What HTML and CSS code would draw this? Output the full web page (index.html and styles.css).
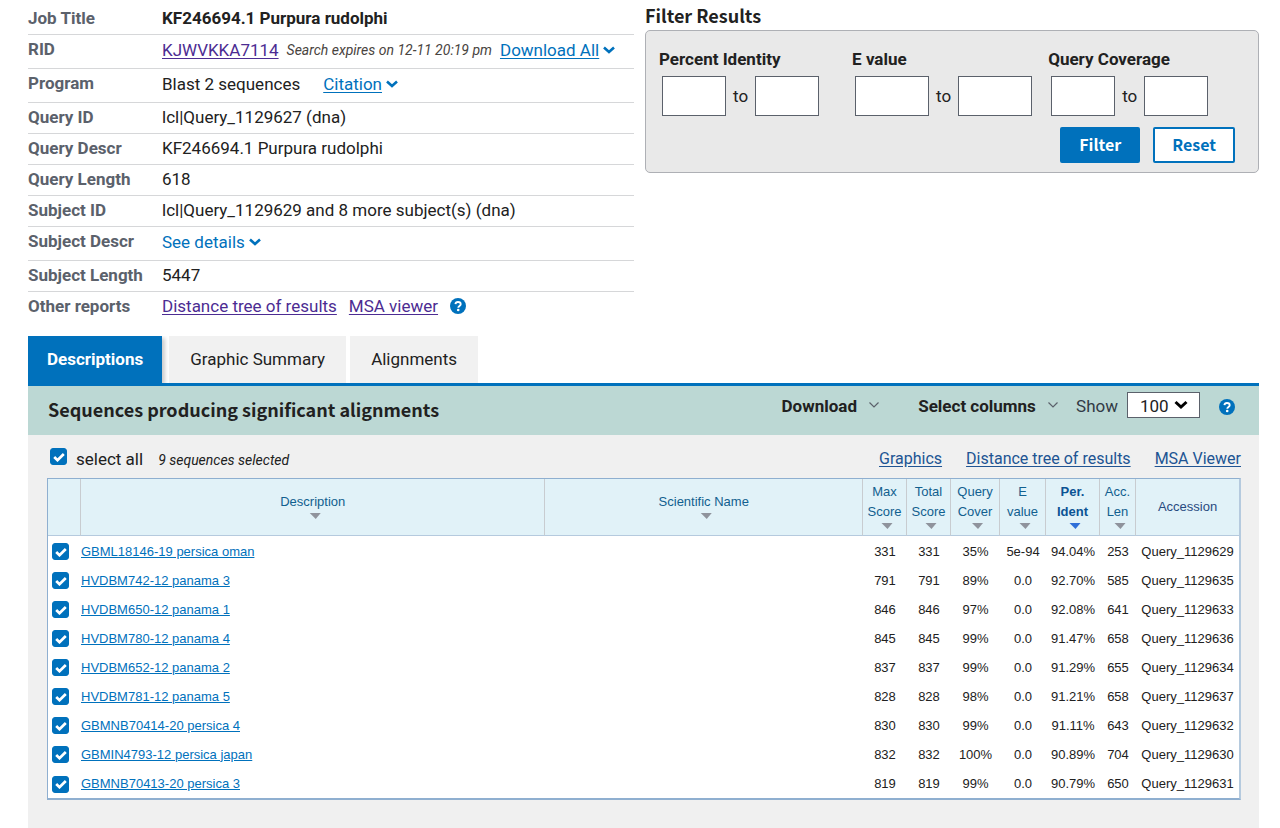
FILE: index.html
```html
<!DOCTYPE html>
<html lang="en">
<head>
    <meta charset="UTF-8">
    <meta name="viewport" content="width=device-width, initial-scale=1.0">
    <title>NCBI Blast: KF246694.1 Purpura rudolphi</title>
    <link rel="stylesheet" href="styles.css">
</head>
<body>
    <svg class="sprite" aria-hidden="true">
        <symbol id="chevron" viewBox="0 0 12 8"><path d="M1 1.500 6 6l5-4.500" fill="none" stroke="currentColor" stroke-width="2.600"/></symbol>
        <symbol id="chevron-thin" viewBox="0 0 10 8"><path d="M.5 1.500 5 6l4.500-4.500" fill="none" stroke="currentColor" stroke-width="1.200"/></symbol>
        <symbol id="help" viewBox="0 0 16 16">
            <circle cx="8" cy="8" r="8" fill="#0071bc"/>
            <path d="M5.400 6.200C5.600 4.600 6.700 4 8 4c1.500 0 2.700.8 2.700 2.200 0 1.800-2.400 1.800-2.400 3.500" fill="none" stroke="#fff" stroke-width="1.900"/>
            <circle cx="8.200" cy="12" r="1.300" fill="#fff"/>
        </symbol>
    </svg>

    <div class="top">
        <dl class="info">
            <div class="row"><dt>Job Title</dt><dd><strong>KF246694.1 Purpura rudolphi</strong></dd></div>
            <div class="row tall">
                <dt>RID</dt>
                <dd class="rid">
                    <a href="#" class="visited">KJWVKKA7114</a>
                    <em class="expires">Search expires on 12-11 20:19 pm</em>
                    <span><a href="#">Download All</a> <svg class="chev"><use href="#chevron"/></svg></span>
                </dd>
            </div>
            <div class="row tall">
                <dt>Program</dt>
                <dd class="program">
                    <span>Blast 2 sequences</span>
                    <span><a href="#">Citation</a> <svg class="chev"><use href="#chevron"/></svg></span>
                </dd>
            </div>
            <div class="row"><dt>Query ID</dt><dd>lcl|Query_1129627 (dna)</dd></div>
            <div class="row"><dt>Query Descr</dt><dd>KF246694.1 Purpura rudolphi</dd></div>
            <div class="row"><dt>Query Length</dt><dd>618</dd></div>
            <div class="row"><dt>Subject ID</dt><dd>lcl|Query_1129629 and 8 more subject(s) (dna)</dd></div>
            <div class="row tall">
                <dt>Subject Descr</dt>
                <dd><button type="button" class="link">See details <svg class="chev"><use href="#chevron"/></svg></button></dd>
            </div>
            <div class="row"><dt>Subject Length</dt><dd>5447</dd></div>
            <div class="row">
                <dt>Other reports</dt>
                <dd class="reports">
                    <a href="#" class="visited">Distance tree of results</a>
                    <a href="#" class="visited">MSA viewer</a>
                    <button type="button" class="help" aria-label="Help"><svg><use href="#help"/></svg></button>
                </dd>
            </div>
        </dl>

        <form class="filter">
            <h2>Filter Results</h2>
            <div class="filter-box">
                <div class="fields">
                    <fieldset>
                        <legend>Percent Identity</legend>
                        <div class="range">
                            <input type="text" id="identFrom" aria-label="Percent identity from">
                            <label for="identTo">to</label>
                            <input type="text" id="identTo">
                        </div>
                    </fieldset>
                    <fieldset class="wide">
                        <legend>E value</legend>
                        <div class="range">
                            <input type="text" id="evalFrom" aria-label="E value from">
                            <label for="evalTo">to</label>
                            <input type="text" id="evalTo">
                        </div>
                    </fieldset>
                    <fieldset>
                        <legend>Query Coverage</legend>
                        <div class="range">
                            <input type="text" id="covFrom" aria-label="Query coverage from">
                            <label for="covTo">to</label>
                            <input type="text" id="covTo">
                        </div>
                    </fieldset>
                </div>
                <div class="actions">
                    <button type="button" class="btn primary">Filter</button>
                    <button type="reset" class="btn">Reset</button>
                </div>
            </div>
        </form>
    </div>

    <div class="tabs" role="tablist">
        <button type="button" role="tab" class="tab active" aria-selected="true">Descriptions</button>
        <button type="button" role="tab" class="tab">Graphic Summary</button>
        <button type="button" role="tab" class="tab">Alignments</button>
    </div>

    <div class="panel">
        <div class="panel-head">
            <h3>Sequences producing significant alignments</h3>
            <div class="controls">
                <button type="button" class="menu">Download <svg class="chev"><use href="#chevron-thin"/></svg></button>
                <button type="button" class="menu columns">Select columns <svg class="chev"><use href="#chevron-thin"/></svg></button>
                <label for="numSeq">Show</label>
                <select id="numSeq">
                    <option>10</option>
                    <option>50</option>
                    <option selected>100</option>
                    <option>250</option>
                </select>
                <button type="button" class="help" aria-label="Help"><svg><use href="#help"/></svg></button>
            </div>
        </div>

        <div class="toolbar">
            <div class="select-all">
                <input type="checkbox" id="selectAll" checked>
                <label for="selectAll">select all</label>
                <em>9 sequences selected</em>
            </div>
            <div class="links">
                <a href="#">Graphics</a>
                <a href="#">Distance tree of results</a>
                <a href="#">MSA Viewer</a>
            </div>
        </div>

        <table>
            <colgroup>
                <col class="c-check"><col class="c-desc"><col class="c-name"><col class="c-score"><col class="c-score"><col class="c-cover"><col class="c-eval"><col class="c-ident"><col class="c-len"><col class="c-acc">
            </colgroup>
            <thead>
                <tr>
                    <th></th>
                    <th>Description<i class="sort"></i></th>
                    <th>Scientific Name<i class="sort"></i></th>
                    <th>Max<br>Score<i class="sort"></i></th>
                    <th>Total<br>Score<i class="sort"></i></th>
                    <th>Query<br>Cover<i class="sort"></i></th>
                    <th>E<br>value<i class="sort"></i></th>
                    <th class="sorted">Per.<br>Ident<i class="sort"></i></th>
                    <th>Acc.<br>Len<i class="sort"></i></th>
                    <th class="acc">Accession</th>
                </tr>
            </thead>
            <tbody id="rows"></tbody>
        </table>
    </div>

    <script src="script.js"></script>
</body>
</html>
```
FILE: styles.css
```css
* {
    box-sizing: border-box;
}
body {
    margin: 0;
    padding: 4px 21px 0 28px;
    font-family: Roboto, "Liberation Sans", sans-serif;
    font-size: 17px;
    line-height: 20px;
    color: #212121;
    background: #fff;
}
.sprite {
    display: none;
}
a {
    color: #0071bc;
    text-underline-offset: 2px;
}
a.visited {
    color: #4c2c92;
}
button {
    font: inherit;
    color: inherit;
    background: none;
    border: 0;
    padding: 0;
    cursor: pointer;
}
.chev {
    width: 12px;
    height: 8px;
    margin-bottom: 2px;
}

/* job summary */
.top {
    display: grid;
    grid-template-columns: 606fr 614fr;
    gap: 11px;
    align-items: start;
}
.info {
    margin: 0;
}
.row {
    display: flex;
    height: 31px;
    padding-top: 4px;
    border-bottom: 1px solid #d6d7d9;
}
.row.tall {
    height: 34px;
}
.row:last-child {
    border-bottom: 0;
}
.info dt {
    width: 134px;
    font-weight: bold;
    color: #5b616b;
}
.info dd {
    display: flex;
    margin: 0;
    white-space: nowrap;
}
.info .chev {
    color: #0071bc;
}
.info dd.rid {
    gap: 8px;
}
.info dd.program {
    gap: 23px;
}
.info dd.reports {
    gap: 12px;
    height: 20px;
    align-items: center;
}
.tall dd {
    padding-top: 1px;
}
.tall .link {
    align-self: flex-start;
}
.expires {
    font-size: 14px;
    color: #494440;
}
.link {
    color: #0071bc;
}
.help svg {
    display: block;
    width: 16px;
    height: 16px;
}

/* filter form */
h2, h3 {
    margin: 0;
    font-family: "Noto Sans CJK JP", "Noto Sans", sans-serif;
    font-weight: bold;
    font-size: 18px;
}
h2 {
    padding-bottom: 4px;
    line-height: 22px;
}
.filter-box {
    height: 143px;
    padding: 18px 23px 0 13px;
    border: 1px solid #aeb0b5;
    border-radius: 5px;
    background: #e9e9e9;
}
.fields {
    display: flex;
    gap: 30px;
}
fieldset {
    border: 0;
    margin: 0;
    padding: 0;
    min-width: 0;
}
legend {
    padding: 0;
    font-weight: bold;
}
.range {
    display: flex;
    align-items: center;
    gap: 7px;
    padding: 7px 0 0 3px;
}
.range input {
    width: 64px;
    height: 40px;
    padding: 4px;
    font: inherit;
    border: 1px solid #5b616b;
    border-radius: 0;
    background: #fff;
}
.wide .range input {
    width: 74px;
}
.fields .wide {
    margin-right: -14px;
    margin-left: 3px;
}
.actions {
    display: flex;
    justify-content: flex-end;
    gap: 13px;
    padding-top: 11px;
}
.btn {
    height: 36px;
    padding: 0 17px 2px;
    font-family: "Noto Sans CJK JP", "Noto Sans", sans-serif;
    font-size: 16px;
    font-weight: bold;
    line-height: 20px;
    color: #0071bc;
    background: #fff;
    border: 2px solid #0071bc;
    border-radius: 2px;
}
.btn.primary {
    color: #fff;
    background: #0071bc;
}

/* tabs */
.tabs {
    display: flex;
    gap: 4px;
    margin-top: 13px;
    border-bottom: 3px solid #0071bc;
}
.tab {
    height: 47px;
    padding: 0 21px 2px;
    background: #f1f1f1;
}
.tab.active {
    padding: 0 19px 2px;
    margin-right: 3px;
    color: #fff;
    font-weight: bold;
    background: #0071bc;
    box-shadow: 3px 2px 4px #ccc;
    clip-path: inset(0 -8px 0 0);
}

/* results */
.panel {
    padding-bottom: 28px;
    background: #f0f0f0;
}
.panel-head {
    display: flex;
    justify-content: space-between;
    align-items: flex-start;
    height: 49px;
    padding: 0 24px 0 20px;
    background: #bcd8d4;
}
h3 {
    line-height: 46px;
}
.controls {
    display: flex;
    align-items: center;
    padding-top: 6px;
}
.menu,
.controls label {
    padding-top: 2px;
}
.menu {
    font-weight: bold;
    margin-right: 39px;
}
.menu .chev {
    width: 10px;
    margin-bottom: 3px;
    margin-left: 8px;
    color: #5b616b;
}
.menu.columns {
    margin-right: 18px;
}
.controls label {
    margin-right: 9px;
    color: #323a45;
}
.controls select {
    width: 73px;
    height: 26px;
    margin-right: 19px;
    padding: 2px 0 0 12px;
    font: inherit;
    color: #212121;
    border: 1px solid #5b616b;
    border-radius: 0;
    appearance: none;
    background: #fff url("data:image/svg+xml,%3Csvg xmlns='http://www.w3.org/2000/svg' viewBox='0 0 14 10'%3E%3Cpath d='M1.500 2L7 7l5.500-5' fill='none' stroke='%23000' stroke-width='3'/%3E%3C/svg%3E") no-repeat 46px 7px / 14px 10px;
}
.controls .help {
    padding-top: 3px;
}
.toolbar {
    display: flex;
    justify-content: space-between;
    height: 43px;
    padding: 13px 18px 0 22px;
}
.select-all {
    display: flex;
}
.select-all label {
    margin: 1px 15px 0 9px;
}
.select-all em {
    font-size: 14px;
    margin-top: 2px;
}
.links {
    display: flex;
    gap: 24px;
    padding-top: 1px;
    font-size: 16px;
}
.links a {
    color: #205493;
}
input[type="checkbox"] {
    appearance: none;
    display: block;
    width: 17px;
    height: 17px;
    margin: 0;
    border: 1px solid #0071bc;
    border-radius: 3px;
    background: #fff;
}
input[type="checkbox"]:checked {
    background: #0071bc url("data:image/svg+xml,%3Csvg xmlns='http://www.w3.org/2000/svg' viewBox='0 0 12 10'%3E%3Cpath d='M1.200 5l3.300 3.200L10.800 2' fill='none' stroke='%23fff' stroke-width='2.700'/%3E%3C/svg%3E") no-repeat center / 12px 10px;
}
table {
    width: calc(100% - 37px);
    margin-left: 19px;
    table-layout: fixed;
    border-collapse: separate;
    border-spacing: 0;
    border: 1px solid #8fafd0;
    border-right-width: 2px;
    border-right-color: #b5cade;
    border-bottom-width: 2px;
    background: #fff;
    font-family: "Liberation Sans", Arial, sans-serif;
    font-size: 13px;
}
.c-check { width: 33px; }
.c-desc { width: 39%; }
.c-score { width: 44px; }
.c-cover { width: 49px; }
.c-eval { width: 46px; }
.c-ident { width: 54px; }
.c-len { width: 36px; }
.c-acc { width: 103px; }
th {
    height: 57px;
    padding: 0;
    font-weight: normal;
    color: #11608f;
    background: #e1f2f8;
    border-right: 1px solid #c8ccd0;
    border-bottom: 1px solid #b5cade;
}
th:last-child {
    border-right: 0;
}
th.sorted {
    font-weight: bold;
    color: #0b5394;
}
th.acc {
    color: #284a80;
}
.sort {
    display: block;
    width: 16px;
    height: 6px;
    margin: 1px auto 3px;
    background: #8f939c;
    clip-path: polygon(5px 0, 100% 0, 11px 100%);
}
.sorted .sort {
    background: #2f6fd8;
}
td {
    height: 29px;
    padding: 2px 0 0;
    text-align: center;
}
td:first-child {
    padding-left: 4px;
}
td.desc {
    text-align: left;
}
td.desc a {
    text-underline-offset: 1px;
}
tbody tr:last-child td {
    height: 30px;
}
```
FILE: script.js
```js
const results = [
    ['GBML18146-19 persica oman', 331, 331, '35%', '5e-94', '94.04%', 253, 'Query_1129629'],
    ['HVDBM742-12 panama 3', 791, 791, '89%', '0.0', '92.70%', 585, 'Query_1129635'],
    ['HVDBM650-12 panama 1', 846, 846, '97%', '0.0', '92.08%', 641, 'Query_1129633'],
    ['HVDBM780-12 panama 4', 845, 845, '99%', '0.0', '91.47%', 658, 'Query_1129636'],
    ['HVDBM652-12 panama 2', 837, 837, '99%', '0.0', '91.29%', 655, 'Query_1129634'],
    ['HVDBM781-12 panama 5', 828, 828, '98%', '0.0', '91.21%', 658, 'Query_1129637'],
    ['GBMNB70414-20 persica 4', 830, 830, '99%', '0.0', '91.11%', 643, 'Query_1129632'],
    ['GBMIN4793-12 persica japan', 832, 832, '100%', '0.0', '90.89%', 704, 'Query_1129630'],
    ['GBMNB70413-20 persica 3', 819, 819, '99%', '0.0', '90.79%', 650, 'Query_1129631']
];

document.getElementById('rows').innerHTML = results.map(([name, ...values]) => `
    <tr>
        <td><input type="checkbox" checked aria-label="Select ${name}"></td>
        <td class="desc"><a href="#">${name}</a></td>
        <td></td>
        ${values.map(value => `<td>${value}</td>`).join('')}
    </tr>`).join('');

const selectAll = document.getElementById('selectAll');
selectAll.addEventListener('change', () => {
    document.querySelectorAll('#rows input').forEach(box => {
        box.checked = selectAll.checked;
    });
});
```
